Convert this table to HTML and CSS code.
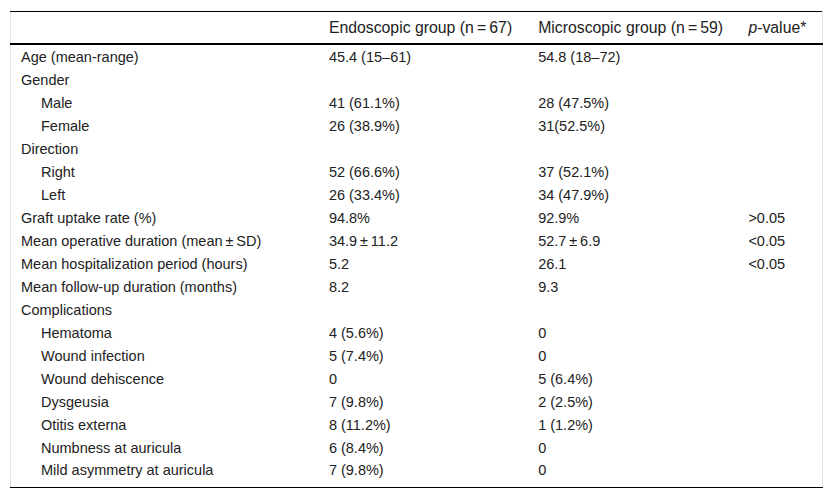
FILE: index.html
```html
<!DOCTYPE html>
<html lang="en">
<head>
<meta charset="utf-8">
<title>Table</title>
<link rel="stylesheet" href="styles.css">
</head>
<body>
<table class="data">
  <colgroup>
    <col class="c1"><col class="c2"><col class="c3"><col class="c4">
  </colgroup>
  <thead>
    <tr>
      <th></th>
      <th>Endoscopic group (n&#8201;=&#8201;67)</th>
      <th>Microscopic group (n&#8201;=&#8201;59)</th>
      <th><i>p</i>-value*</th>
    </tr>
  </thead>
  <tbody>
    <tr><td>Age (mean-range)</td><td>45.4 (15–61)</td><td>54.8 (18–72)</td><td></td></tr>
    <tr><td>Gender</td><td></td><td></td><td></td></tr>
    <tr><td class="ind">Male</td><td>41 (61.1%)</td><td>28 (47.5%)</td><td></td></tr>
    <tr><td class="ind">Female</td><td>26 (38.9%)</td><td>31(52.5%)</td><td></td></tr>
    <tr><td>Direction</td><td></td><td></td><td></td></tr>
    <tr><td class="ind">Right</td><td>52 (66.6%)</td><td>37 (52.1%)</td><td></td></tr>
    <tr><td class="ind">Left</td><td>26 (33.4%)</td><td>34 (47.9%)</td><td></td></tr>
    <tr><td>Graft uptake rate (%)</td><td>94.8%</td><td>92.9%</td><td>&gt;0.05</td></tr>
    <tr><td>Mean operative duration (mean&#8201;±&#8201;SD)</td><td>34.9&#8201;±&#8201;11.2</td><td>52.7&#8201;±&#8201;6.9</td><td>&lt;0.05</td></tr>
    <tr><td>Mean hospitalization period (hours)</td><td>5.2</td><td>26.1</td><td>&lt;0.05</td></tr>
    <tr><td>Mean follow-up duration (months)</td><td>8.2</td><td>9.3</td><td></td></tr>
    <tr><td>Complications</td><td></td><td></td><td></td></tr>
    <tr><td class="ind">Hematoma</td><td>4 (5.6%)</td><td>0</td><td></td></tr>
    <tr><td class="ind">Wound infection</td><td>5 (7.4%)</td><td>0</td><td></td></tr>
    <tr><td class="ind">Wound dehiscence</td><td>0</td><td>5 (6.4%)</td><td></td></tr>
    <tr><td class="ind">Dysgeusia</td><td>7 (9.8%)</td><td>2 (2.5%)</td><td></td></tr>
    <tr><td class="ind">Otitis externa</td><td>8 (11.2%)</td><td>1 (1.2%)</td><td></td></tr>
    <tr><td class="ind">Numbness at auricula</td><td>6 (8.4%)</td><td>0</td><td></td></tr>
    <tr class="last"><td class="ind">Mild asymmetry at auricula</td><td>7 (9.8%)</td><td>0</td><td></td></tr>
  </tbody>
</table>
</body>
</html>
```

FILE: styles.css
```css
html, body {
  margin: 0;
  padding: 0;
  background: #ffffff;
}
body {
  padding: 11px 10px 0 10px;
  font-family: "Liberation Sans", Arial, sans-serif;
  font-size: 14.5px;
  color: #222222;
}
.data {
  width: 813px;
  border-collapse: collapse;
  border-top: 1px solid #000000;
  border-bottom: 1px solid #000000;
  border-left: 1px solid #e2e2e2;
  border-right: 1px solid #e2e2e2;
  table-layout: fixed;
}
.c1 { width: 308px; }
.c2 { width: 209px; }
.c3 { width: 210px; }
.c4 { width: 84px; }
.data th {
  font-weight: normal;
  font-size: 15.8px;
  text-align: left;
  padding: 0 0 0 10px;
  height: 31px;
  line-height: 17px;
  border-bottom: 2px solid #000000;
  white-space: nowrap;
}
.data td {
  padding: 0 0 0 10px;
  height: 23px;
  line-height: 16px;
  white-space: nowrap;
  vertical-align: middle;
}
.data td.ind {
  padding-left: 30px;
}
.data tr.last td {
  height: 28px;
  vertical-align: top;
  padding-top: 3px;
  box-sizing: border-box;
}
```
